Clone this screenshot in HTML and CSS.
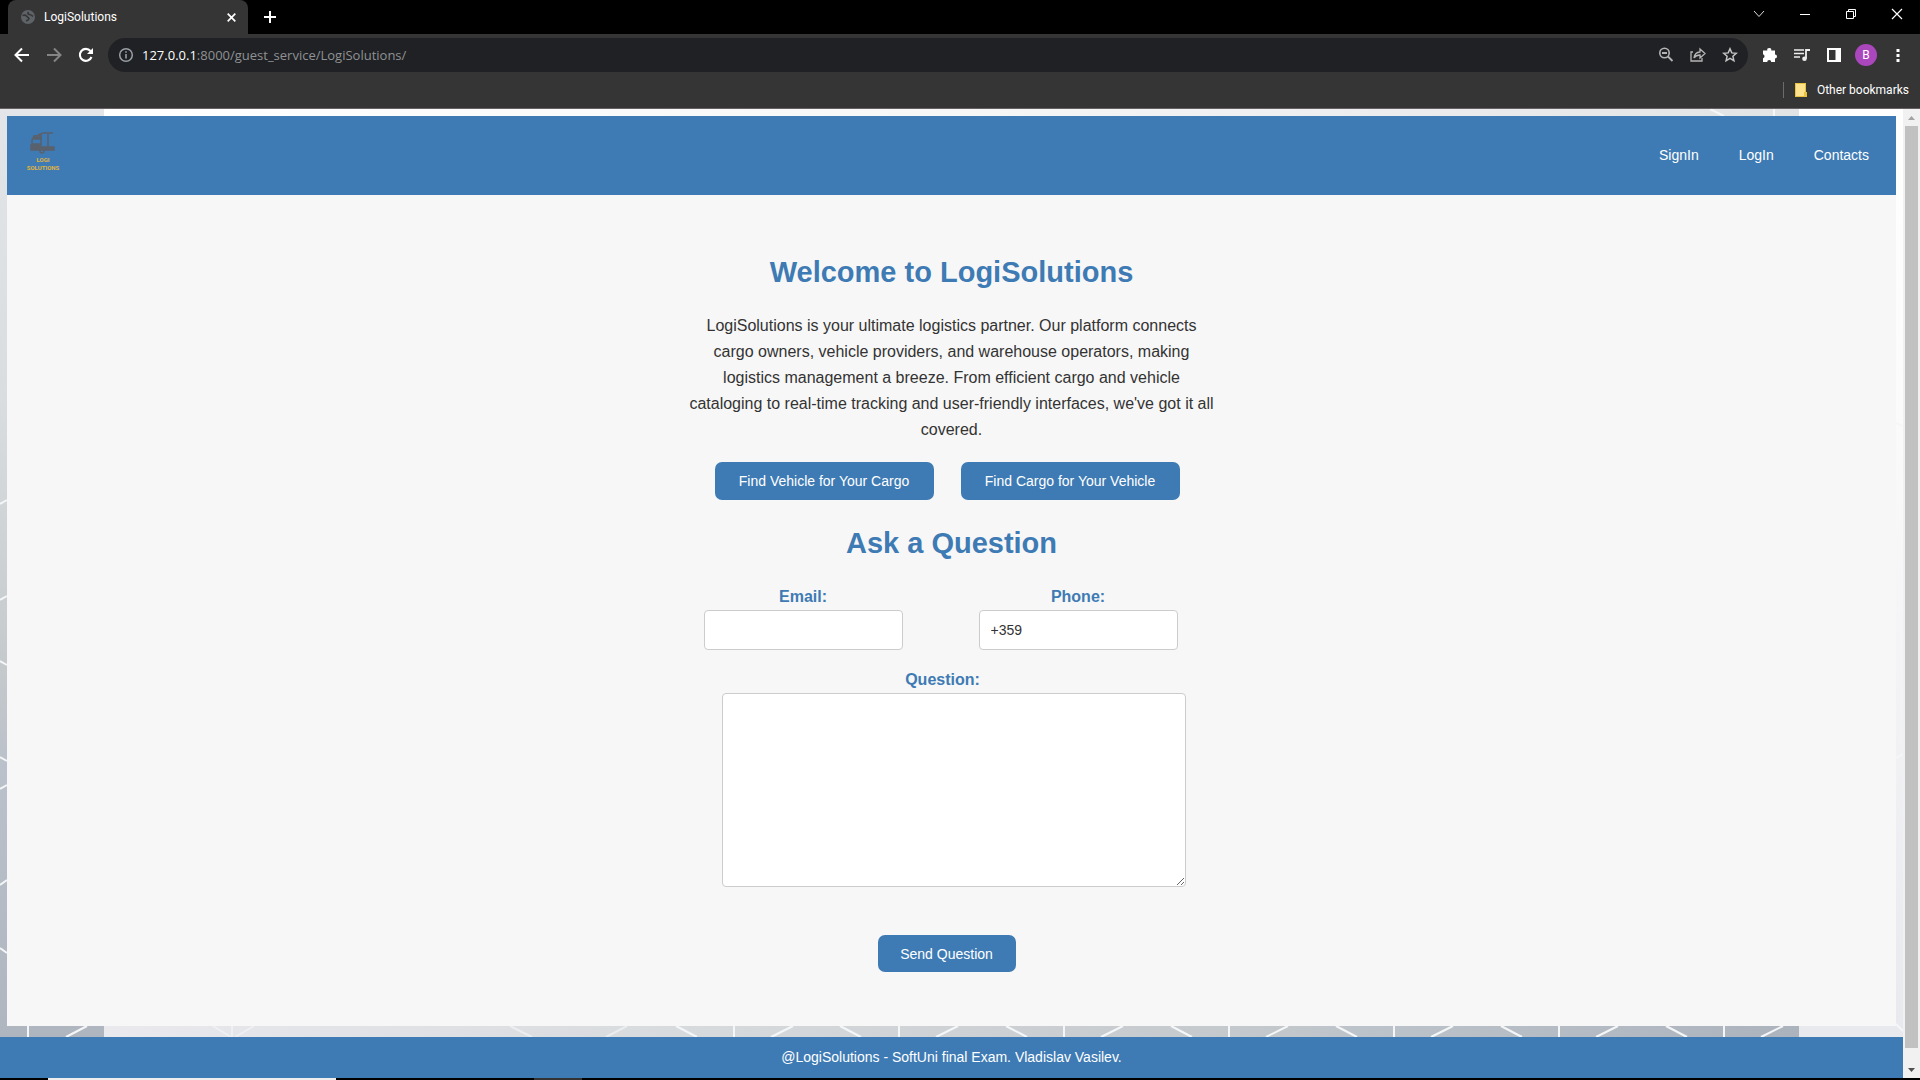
FILE: index.html
```html
<!DOCTYPE html>
<html lang="en">
<head>
<meta charset="utf-8">
<title>LogiSolutions</title>
<link rel="stylesheet" href="styles.css">
</head>
<body>
<div class="browser">
  <div class="tabstrip">
    <div class="tab">
      <svg class="favicon" viewBox="0 0 14 14"><circle cx="7" cy="7" r="7" fill="#5f6368"/><path d="M1.500 5.500Q4 4.500 5.500 6T8 8.500Q7 11 5 10.500M7.500 2Q6 4 8.500 4.500T12 6.500" fill="none" stroke="#353535" stroke-width="1.700"/></svg>
      <span class="tab-title">LogiSolutions</span>
      <button class="icon-btn tab-close" aria-label="Close tab"><svg width="9" height="9" viewBox="0 0 9 9"><path d="M.7.700l7.600 7.600M8.300.7L.7 8.300" stroke="#fff" stroke-width="1.700"/></svg></button>
    </div>
    <button class="icon-btn new-tab" aria-label="New tab"><svg width="12" height="12" viewBox="0 0 12 12"><path d="M6 0v12M0 6h12" stroke="#fff" stroke-width="2"/></svg></button>
    <div class="window-controls">
      <button class="icon-btn" aria-label="Search tabs"><svg width="12" height="12" viewBox="0 0 12 12"><path d="M1 3l5 5.500L11 3" fill="none" stroke="#ddd"/></svg></button>
      <button class="icon-btn" aria-label="Minimize"><svg width="12" height="12" viewBox="0 0 12 12"><path d="M1 6.500h10" stroke="#fff"/></svg></button>
      <button class="icon-btn" aria-label="Restore"><svg width="12" height="12" viewBox="0 0 12 12"><path d="M1.500 3.500h7v7h-7zM3.500 3V1.500h7v7H9" fill="none" stroke="#fff"/></svg></button>
      <button class="icon-btn" aria-label="Close"><svg width="12" height="12" viewBox="0 0 12 12"><path d="M1 1l10 10M11 1L1 11" stroke="#fff" stroke-width="1.200"/></svg></button>
    </div>
  </div>
  <div class="toolbar">
    <div class="nav-buttons">
      <button class="icon-btn" aria-label="Back"><svg width="16" height="16" viewBox="0 0 16 16"><path d="M15 8H2M8 1.500L1.500 8 8 14.500" fill="none" stroke="#fff" stroke-width="2"/></svg></button>
      <button class="icon-btn" aria-label="Forward"><svg width="16" height="16" viewBox="0 0 16 16"><path d="M1 8h13M8 1.500L14.500 8 8 14.500" fill="none" stroke="#858585" stroke-width="2"/></svg></button>
      <button class="icon-btn" aria-label="Reload"><svg width="16" height="16" viewBox="0 0 16 16"><path d="M13.500 10A6 6 0 1 1 12.500 4" fill="none" stroke="#fff" stroke-width="2.100"/><path d="M15 1v6H9z" fill="#fff"/></svg></button>
    </div>
    <div class="omnibox">
      <svg class="glyph" viewBox="0 0 16 16"><circle cx="8" cy="8" r="6.300" fill="none" stroke="#9aa0a6" stroke-width="1.500"/><path d="M8 7v4.500M8 4.200v1.600" stroke="#9aa0a6" stroke-width="1.600"/></svg>
      <span class="url"><b>127.0.0.1</b>:8000/guest_service/LogiSolutions/</span>
      <div class="omni-icons">
        <button class="icon-btn" aria-label="Zoom"><svg width="16" height="16" viewBox="0 0 16 16"><circle cx="6.500" cy="6" r="4.700" fill="none" stroke="#b5b5b5" stroke-width="1.600"/><path d="M4 6h5M10 9.500l4.500 4.500" stroke="#b5b5b5" stroke-width="1.800"/></svg></button>
        <button class="icon-btn" aria-label="Share"><svg width="16" height="16" viewBox="0 0 16 16"><path d="M3 5H1v9h11v-3" fill="none" stroke="#b5b5b5" stroke-width="1.300"/><path d="M4 11Q4.500 5.500 10 5V2l5 4.500-5 4.500V8Q6 8 4 11z" fill="none" stroke="#b5b5b5" stroke-width="1.300"/></svg></button>
        <button class="icon-btn" aria-label="Bookmark"><svg width="16" height="16" viewBox="0 0 16 16"><path d="M8 1.800l1.800 4.100 4.500.4-3.400 3 1 4.400L8 11.400l-3.900 2.300 1-4.400-3.400-3 4.500-.4z" fill="none" stroke="#c4c4c4" stroke-width="1.500"/></svg></button>
      </div>
    </div>
    <div class="ext-icons">
      <button class="icon-btn" aria-label="Extensions"><svg width="16" height="16" viewBox="0 0 16 16"><path d="M1 3.500h4.300a2 2 0 1 1 3.900 0H13v4a2 2 0 1 1 0 4V15H9.200a2 2 0 0 0-4 0H1v-3.800a2 2 0 0 0 0-3.900z" fill="#fff"/></svg></button>
      <button class="icon-btn" aria-label="Media"><svg width="16" height="16" viewBox="0 0 16 16"><path d="M0 3h10M0 6.500h10M0 10h6" stroke="#eee" stroke-width="1.700"/><path d="M12 11.500V3h4" fill="none" stroke="#eee" stroke-width="1.800"/><circle cx="10.500" cy="11.800" r="2.300" fill="#eee"/></svg></button>
      <button class="icon-btn" aria-label="Side panel"><svg width="16" height="16" viewBox="0 0 16 16"><path d="M1 1h14v14H1zM3 3v10h6.500V3z" fill="#fff" fill-rule="evenodd"/></svg></button>
      <button class="avatar" aria-label="Profile">B</button>
      <button class="icon-btn" aria-label="Menu"><svg width="16" height="16" viewBox="0 0 16 16"><path d="M6.500 2h3v3h-3zM6.500 7h3v3h-3zM6.500 12h3v3h-3z" fill="#fff"/></svg></button>
    </div>
  </div>
  <div class="bookmarks">
    <a href="#" class="bookmark"><svg width="12" height="14" viewBox="0 0 12 14"><path d="M0 0h11v9h1v5H0z" fill="#e9c23f"/><path d="M1 1h9v8H9v4H1z" fill="#ffe38c"/></svg>Other bookmarks</a>
  </div>
</div>
<div class="viewport">
  <div class="page">
    <svg class="backdrop" viewBox="0 0 1903 969" preserveAspectRatio="none" aria-hidden="true">
      <defs>
        <linearGradient id="left" x1="0" y1="0" x2="0" y2="1"><stop offset="0" stop-color="#e3e5e8"/><stop offset=".3" stop-color="#d9dde0"/><stop offset=".58" stop-color="#c4c9cc"/><stop offset=".68" stop-color="#bbc1ca"/><stop offset="1" stop-color="#adb4bd"/></linearGradient>
        <linearGradient id="right" x1="0" y1="0" x2="0" y2="1"><stop offset="0" stop-color="#fff"/><stop offset=".3" stop-color="#fbfbfb"/><stop offset="1" stop-color="#e7e8ed"/></linearGradient>
        <linearGradient id="bottom"><stop offset="0" stop-color="#e9e9ee"/><stop offset=".35" stop-color="#d7dadd"/><stop offset=".7" stop-color="#c2c7cb"/><stop offset=".74" stop-color="#bcc3ca"/><stop offset="1" stop-color="#adb3bd"/></linearGradient>
        <linearGradient id="top"><stop offset="0" stop-color="#fff"/><stop offset=".5" stop-color="#f7f7f8"/><stop offset="1" stop-color="#e2e3e5"/></linearGradient>
      </defs>
      <path d="M0 0h104v969H0z" fill="url(#left)"/>
      <path d="M1799 0h104v969h-104z" fill="url(#right)"/>
      <path d="M104 0h1695v400H104z" fill="url(#top)"/>
      <path d="M104 400h1695v569H104z" fill="url(#bottom)"/>
      <g fill="none" stroke="#f5f6f7" stroke-width="2">
        <path d="M0 395l7-4M0 491l7-4M0 552l7 4M0 648l7 4M0 680l7-4M0 776l7-5M0 839l7 5M28 917v11M66 928l21-11"/>
        <path d="M213 917l18 11M254 917l-19 11M232 917v11M510 917l22 11M627 917l-21 11" opacity=".6"/>
        <path d="M676 917l21 11M793 917l-22 11M734 917v11M840 917l21 11M958 917l-22 11M899 917v11M1006 917l21 11M1123 917l-22 11M1064 917v11M1171 917l21 11M1288 917l-22 11M1229 917v11M1336 917l21 11M1453 917l-22 11M1394 917v11M1501 917l21 11M1618 917l-22 11M1559 917v11M1666 917l21 11M1783 917l-22 11M1724 917v11"/>
        <path d="M1896 314l7 3M1896 464l7 3M1896 500l7-3M1896 649l7-4M1896 915l7 7M1710 0l14 7M1774 0v7"/>
      </g>
    </svg>
    <header class="site-header">
      <a href="#" class="logo" aria-label="LogiSolutions home">
        <svg width="38" height="44" viewBox="0 0 38 44">
          <g fill="none" stroke="#59616d" stroke-width="1.500"><path d="M8 15V8l2-4 8-1M17 4v12M8 12h9M24 2v14M14 3l5-2h10" /><path d="M17 15h13v3H17z" fill="#59616d"/><path d="M7 13h9v5H7zM10 5h7v2h-7z" fill="#59616d"/><circle cx="18" cy="19" r="2"/></g>
          <text x="19" y="30" class="logo-text">LOGI</text>
          <text x="19" y="38" class="logo-text">SOLUTIONS</text>
        </svg>
      </a>
      <nav class="site-nav"><a href="#">SignIn</a><a href="#">LogIn</a><a href="#">Contacts</a></nav>
    </header>
    <main class="content">
      <section class="intro">
        <h1>Welcome to LogiSolutions</h1>
        <p>LogiSolutions is your ultimate logistics partner. Our platform connects cargo owners, vehicle providers, and warehouse operators, making logistics management a breeze. From efficient cargo and vehicle cataloging to real-time tracking and user-friendly interfaces, we've got it all covered.</p>
        <div class="actions"><button class="btn">Find Vehicle for Your Cargo</button><button class="btn">Find Cargo for Your Vehicle</button></div>
      </section>
      <form class="ask">
        <h2>Ask a Question</h2>
        <div class="fields">
          <div class="field"><label for="email">Email:</label><input id="email" type="email"></div>
          <div class="field"><label for="phone">Phone:</label><input id="phone" type="tel" value="+359"></div>
        </div>
        <div class="question"><label for="question">Question:</label><textarea id="question"></textarea></div>
        <button class="btn send" type="button">Send Question</button>
      </form>
    </main>
    <footer class="site-footer">@LogiSolutions - SoftUni final Exam. Vladislav Vasilev.</footer>
  </div>
  <div class="scrollbar" aria-hidden="true">
    <svg width="17" height="17" viewBox="0 0 17 17"><path d="M5 11l3.500-4 3.500 4z" fill="#a3a3a3"/></svg>
    <div class="thumb"></div>
    <svg class="arrow-down" width="17" height="17" viewBox="0 0 17 17"><path d="M5 7l3.500 4L12 7z" fill="#505050"/></svg>
  </div>
</div>
<div class="taskbar" aria-hidden="true"><span class="task-active"></span><span class="task-idle"></span></div>
</body>
</html>
```
FILE: styles.css
```css
* { box-sizing: border-box; }
body {
  margin: 0;
  min-height: 100vh;
  display: flex;
  flex-direction: column;
  background: #000;
  color: #333;
  font: 16px/26px "Liberation Sans", Arial, sans-serif;
}
button { font: inherit; border: 0; cursor: pointer; }
a { color: inherit; text-decoration: none; }
svg { display: block; flex: none; }

/* Browser frame */
.browser { background: #353535; color: #fff; font: 12px/16px Roboto, sans-serif; border-bottom: 1px solid #666062; }
.icon-btn { display: flex; align-items: center; justify-content: center; padding: 0; background: none; }
.tabstrip { display: flex; height: 34px; padding-left: 8px; background: #000; }
.tab { display: flex; align-items: center; width: 240px; padding: 0 12px 0 13px; border-radius: 8px 8px 0 0; background: #353535; }
.favicon { width: 14px; height: 14px; margin-right: 9px; }
.tab-title { flex: 1; }
.new-tab { width: 44px; }
.window-controls { display: flex; gap: 34px; margin-left: auto; padding: 0 17px 6px 0; }
.toolbar { display: flex; align-items: center; height: 42px; padding: 0 14px; }
.nav-buttons { display: flex; gap: 16px; margin-right: 14px; }
.omnibox { flex: 1; display: flex; align-items: center; height: 34px; padding: 0 10px; border-radius: 17px; background: #202124; }
.glyph { width: 16px; height: 16px; margin-right: 8px; }
.url { color: #8f9295; font: 13px/18px "Open Sans", sans-serif; }
.url b { color: #fff; font-weight: 400; }
.omni-icons { display: flex; gap: 16px; margin-left: auto; }
.ext-icons { display: flex; align-items: center; gap: 16px; margin-left: 14px; }
.avatar { width: 22px; height: 22px; margin: 0 -3px; padding: 0; border-radius: 50%; background: #ab47bc; color: #fff; }
.bookmarks { display: flex; justify-content: flex-end; height: 32px; padding: 6px 11px 10px; }
.bookmark { display: flex; align-items: center; gap: 10px; padding-left: 11px; border-left: 1px solid #6b6b6b; }

/* Page area */
.viewport { flex: 1; display: flex; }
.page { flex: 1; position: relative; display: flex; flex-direction: column; padding-top: 7px; background: #fff; }
.backdrop { position: absolute; inset: 0; width: 100%; height: 100%; }
.site-header, .content, .site-footer { position: relative; }
.site-header {
  display: flex;
  justify-content: space-between;
  height: 79px;
  margin: 0 7px;
  padding: 16px 27px 0 17px;
  background: #3e7bb4;
  color: #fff;
  font-size: 14px;
}
.logo-text { fill: #e0b43c; font: bold 6px Roboto, Arial, sans-serif; text-anchor: middle; }
.site-nav { display: flex; gap: 40px; padding-top: 10px; }
.content { flex: 1; display: flex; flex-direction: column; align-items: center; margin: 0 7px; padding: 59px 20px 50px; background: #f7f7f7; text-align: center; }
.intro, .ask { width: 100%; max-width: 540px; }
h1, h2 { margin: 0; color: #3e7bb4; font-size: 29px; line-height: 36px; }
p { margin: 23px 0 19px; padding: 0 5px; }
.actions { display: flex; justify-content: center; gap: 27px; padding-right: 9px; }
.btn { height: 38px; padding: 0 20px; border-radius: 7px; background: #3e7bb4; color: #fff; font-size: 14px; line-height: 20px; }
.actions .btn { width: 219px; }
.ask { display: flex; flex-direction: column; align-items: center; padding-top: 25px; }
label { color: #3e7bb4; font-weight: bold; }
.fields { display: flex; justify-content: center; gap: 76px; margin: 23px 0 17px; padding-right: 22px; }
.field { display: flex; flex-direction: column; }
input, textarea { border: 1px solid #ccc; border-radius: 4px; background: #fff; color: #333; font: 14px/20px "Liberation Sans", Arial, sans-serif; }
input { width: 199px; height: 40px; padding: 0 11px; }
.question { display: flex; flex-direction: column; align-items: center; width: 100%; }
.question label { padding-right: 18px; }
textarea { width: 464px; height: 194px; margin-left: 4px; padding: 11px; }
.send { width: 138px; height: 37px; margin: 48px 10px 0 0; }
.site-footer { margin-top: 11px; padding: 7px 0 8px; background: #3e7bb4; color: #fff; font-size: 14px; text-align: center; }

.scrollbar { display: flex; flex-direction: column; width: 17px; background: #f1f1f1; }
.thumb { flex: 1; margin: 0 2px; background: #c1c1c1; }
.arrow-down { margin-top: 13px; }
.taskbar { display: flex; height: 2px; padding-left: 48px; }
.task-active { width: 288px; background: #eee; }
.task-idle { width: 48px; margin-left: 198px; background: #333; }
```
